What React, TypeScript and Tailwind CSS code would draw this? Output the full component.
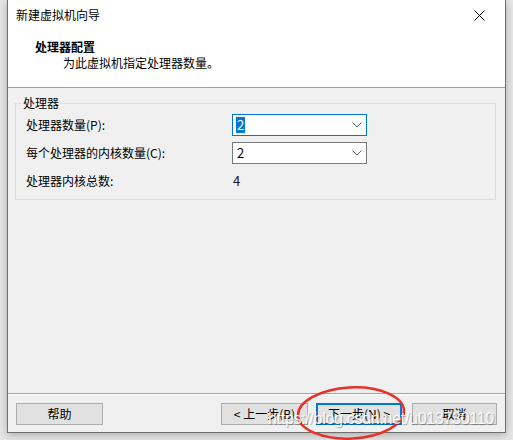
import React from 'react';

const ui = "font-['Microsoft_YaHei_UI','Noto_Sans_CJK_SC',sans-serif]";

const Chevron: React.FC = () => (
  <svg width="10" height="6" viewBox="0 0 10 6" className="shrink-0">
    <path d="M0.5 0.5 L5 5 L9.5 0.5" fill="none" stroke="#606060" strokeWidth="1" />
  </svg>
);

interface ComboProps {
  value: string;
  focused?: boolean;
}

const Combo: React.FC<ComboProps> = ({ value, focused }) => (
  <div
    className={`w-[135px] h-[22px] bg-white border flex items-center justify-between pl-[3px] pr-[4px] ${
      focused ? 'border-[#0078d7]' : 'border-[#7a7a7a]'
    }`}
  >
    <span
      className={`px-[1px] h-[16px] leading-[16px] text-[13px] ${
        focused ? 'bg-[#0078d7] text-white' : 'text-black'
      }`}
    >
      {value}
    </span>
    <Chevron />
  </div>
);

const Button: React.FC<{ label: string; primary?: boolean; className?: string }> = ({ label, primary, className }) => (
  <button
    className={`h-[22px] bg-[#e1e1e1] text-[12px] text-black flex items-center justify-center ${
      primary ? 'border-2 border-[#0078d7]' : 'border border-[#adadad]'
    } ${className ?? ''}`}
  >
    {label}
  </button>
);

export default function App() {
  return (
    <div className={`relative w-[513px] h-[440px] bg-[#e6e6e6] overflow-hidden ${ui}`}>
      <div className="ml-[7px] w-[499px] h-[433px] border-x border-b border-[#6e6e6e] bg-[#f0f0f0] flex flex-col shadow-[0_2px_8px_rgba(0,0,0,0.25)]">
        {/* title bar */}
        <div className="h-[30px] bg-white flex items-center justify-between pl-[8px] pr-[20px]">
          <span className="text-[12px] text-black">新建虚拟机向导</span>
          <svg width="11" height="11" viewBox="0 0 11 11">
            <path d="M0.5 0.5 L10.5 10.5 M10.5 0.5 L0.5 10.5" stroke="#000" strokeWidth="1" />
          </svg>
        </div>

        {/* header */}
        <div className="h-[58px] bg-white border-b border-[#a0a0a0] flex flex-col pl-[27px] pt-[9px]">
          <span className="text-[12px] leading-[16px] font-bold text-black">处理器配置</span>
          <span className="text-[12px] leading-[16px] text-black pl-[28px]">为此虚拟机指定处理器数量。</span>
        </div>

        {/* body */}
        <div className="flex-1">
          <div className="relative mt-[15px] ml-[7px] w-[481px] h-[97px] border border-[#dcdcdc] pt-[10px] pl-[10px] flex flex-col gap-[6px]">
            <span className="absolute left-[6px] -top-[9px] px-[1px] bg-[#f0f0f0] text-[12px] leading-[16px] text-black">
              处理器
            </span>
            <div className="flex items-center h-[22px]">
              <span className="w-[206px] text-[12px] text-black">处理器数量(P):</span>
              <Combo value="2" focused />
            </div>
            <div className="flex items-center h-[22px]">
              <span className="w-[206px] text-[12px] text-black">每个处理器的内核数量(C):</span>
              <Combo value="2" />
            </div>
            <div className="flex items-center h-[22px]">
              <span className="w-[207px] text-[12px] text-black">处理器内核总数:</span>
              <span className="text-[13px] text-[#1a1030]">4</span>
            </div>
          </div>
        </div>

        {/* footer */}
        <div className="border-t border-[#a0a0a0]">
          <div className="border-t border-white h-[38px] flex items-start pt-[8px] pl-[8px] pr-[8px]">
            <Button label="帮助" className="w-[87px]" />
            <Button label="< 上一步(B)" className="w-[87px] ml-[118px]" />
            <Button label="下一步(N) >" primary className="w-[86px] ml-[8px]" />
            <Button label="取消" className="w-[85px] ml-[10px]" />
          </div>
        </div>
      </div>

      {/* annotation ellipse */}
      <svg className="absolute left-[295px] top-[385px]" width="112" height="56" viewBox="0 0 112 56">
        <ellipse cx="56" cy="28" rx="53" ry="25.5" fill="none" stroke="#e8302a" strokeWidth="2.5" transform="rotate(-3 56 28)" />
      </svg>

      {/* watermark */}
      <span className="absolute left-[268px] top-[410px] font-['Liberation_Sans',Arial,sans-serif] text-[16px] leading-[18px] tracking-[-0.3px] text-white/90 [text-shadow:1px_1px_1px_rgba(0,0,0,0.3)] whitespace-nowrap">
        https://blog.csdn.net/u013730110
      </span>
    </div>
  );
}
